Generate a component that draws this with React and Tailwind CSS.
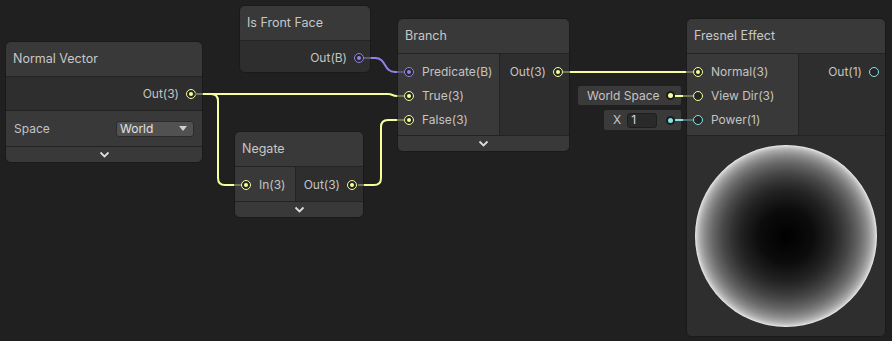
import React from "react";

const PORT = {
  v3: { ring: "border-[#F6FF9A]", dot: "bg-[#F6FF9A]" },
  bool: { ring: "border-[#9481E6]", dot: "bg-[#9481E6]" },
  v1: { ring: "border-[#84E4E7]", dot: "bg-[#84E4E7]" },
};

const Port = ({ type, on }) => {
  const c = PORT[type];
  return (
    <span className={`flex h-[10px] w-[10px] shrink-0 items-center justify-center rounded-full border-[1.5px] bg-[#262626] ${c.ring}`}>
      {on && <span className={`h-[4px] w-[4px] rounded-full ${c.dot}`} />}
    </span>
  );
};

const InRow = ({ label, type, on }) => (
  <div className="flex h-6 items-center gap-[8px] pl-[6px]">
    <Port type={type} on={on} />
    <span>{label}</span>
  </div>
);

const OutRow = ({ label, type, on }) => (
  <div className="flex h-6 items-center justify-end gap-[7px] pr-[6px]">
    <span>{label}</span>
    <Port type={type} on={on} />
  </div>
);

const Foot = () => (
  <div className="flex h-[16px] items-center justify-center border-t border-[#232323] bg-[#393939]">
    <svg width="11" height="7" viewBox="0 0 11 7">
      <path d="M1.5 1.5l4 4 4-4" stroke="#dcdcdc" strokeWidth="1.8" fill="none" />
    </svg>
  </div>
);

const Node = ({ className, title, children }) => (
  <div className={`absolute flex flex-col overflow-hidden rounded-[6px] border border-[#1a1a1a] bg-[#2e2e2e] text-[12px] text-[#c4c4c4] ${className}`}>
    <div className="flex h-[35px] shrink-0 items-center border-b border-[#232323] bg-[#393939] px-[7px] text-[12.5px] text-[#c8c8c8]">
      {title}
    </div>
    {children}
  </div>
);

const Dot = ({ color }) => (
  <span className="flex h-[9px] w-[9px] items-center justify-center rounded-full bg-[#1c1c1c]">
    <span className={`h-[5px] w-[5px] rounded-full ${color}`} />
  </span>
);

const Y = "#F6FF9A";
const YD = "#74765a";
const PU = "#9481E6";
const PD = "#5d5680";
const CY = "#84E4E7";
const CD = "#4d7374";

export default function App() {
  return (
    <div className="relative h-[341px] w-[892px] overflow-hidden bg-[#202020] font-['Inter',sans-serif]">
      {/* Normal Vector */}
      <Node className="left-[5px] top-[41px] w-[198px]" title="Normal Vector">
        <div className="pb-[4px] pt-[5px]">
          <OutRow label="Out(3)" type="v3" on />
        </div>
        <div className="flex h-[36px] items-center justify-between border-t border-[#232323] bg-[#393939] pl-[8px] pr-[8px]">
          <span>Space</span>
          <div className="flex h-[16px] w-[78px] items-center justify-between rounded-[3px] border border-[#2c2c2c] bg-[#515151] pl-[3px] pr-[6px] text-[#e2e2e2]">
            <span>World</span>
            <svg width="8" height="5" viewBox="0 0 8 5">
              <path d="M0 0h8L4 5z" fill="#cfcfcf" />
            </svg>
          </div>
        </div>
        <Foot />
      </Node>

      {/* Is Front Face */}
      <Node className="left-[239px] top-[5px] w-[132px]" title="Is Front Face">
        <div className="pb-[2px] pt-[5px]">
          <OutRow label="Out(B)" type="bool" on />
        </div>
      </Node>

      {/* Branch */}
      <Node className="left-[397px] top-[18px] w-[173px]" title="Branch">
        <div className="flex">
          <div className="w-[102px] border-r border-[#232323] bg-[#393939] pb-[3px] pt-[6px]">
            <InRow label="Predicate(B)" type="bool" on />
            <InRow label="True(3)" type="v3" on />
            <InRow label="False(3)" type="v3" on />
          </div>
          <div className="flex-1 pt-[6px]">
            <OutRow label="Out(3)" type="v3" on />
          </div>
        </div>
        <Foot />
      </Node>

      {/* Negate */}
      <Node className="left-[234px] top-[131px] w-[130px]" title="Negate">
        <div className="flex">
          <div className="w-[61px] border-r border-[#232323] bg-[#393939] pb-[4px] pt-[6px]">
            <InRow label="In(3)" type="v3" on />
          </div>
          <div className="flex-1 pt-[6px]">
            <OutRow label="Out(3)" type="v3" on />
          </div>
        </div>
        <Foot />
      </Node>

      {/* Fresnel Effect */}
      <Node className="left-[686px] top-[18px] h-[319px] w-[200px]" title="Fresnel Effect">
        <div className="flex">
          <div className="w-[112px] border-r border-[#232323] bg-[#393939] pb-[3px] pt-[6px]">
            <InRow label="Normal(3)" type="v3" on />
            <InRow label="View Dir(3)" type="v3" />
            <InRow label="Power(1)" type="v1" />
          </div>
          <div className="flex-1 pt-[6px]">
            <OutRow label="Out(1)" type="v1" />
          </div>
        </div>
        <div className="flex flex-1 items-center justify-center border-t border-[#232323] bg-[#2e2e2e]">
          <div className="h-[182px] w-[182px] rounded-full bg-[radial-gradient(circle_closest-side,#000_0%,#0c0c0c_30%,#222_50%,#333_60%,#494949_70%,#666_80%,#797979_85%,#909090_90%,#afafaf_95%,#cccccc_98%,#eeeeee_100%)]" />
        </div>
      </Node>

      {/* inline default values */}
      <div className="absolute left-[578px] top-[86px] flex h-[19px] w-[103px] items-center justify-between rounded-[2px] bg-[#3a3a3a] pl-[9px] pr-[6px] text-[12px] text-[#c4c4c4]">
        <span>World Space</span>
        <Dot color="bg-[#F6FF9A]" />
      </div>
      <div className="absolute left-[604px] top-[110px] flex h-[20px] w-[77px] items-center rounded-[2px] bg-[#3a3a3a] pl-[9px] pr-[6px] text-[12px] text-[#c4c4c4]">
        <span>X</span>
        <div className="ml-[6px] flex h-[15px] w-[30px] items-center rounded-[3px] border border-[#1e1e1e] bg-[#2a2a2a] pl-[3px] text-[#d8d8d8]">1</div>
        <span className="ml-auto">
          <Dot color="bg-[#84E4E7]" />
        </span>
      </div>

      {/* wires */}
      <svg className="pointer-events-none absolute inset-0" width="892" height="341" fill="none" strokeWidth="2">
        {/* Normal Vector out */}
        <path d="M195 94H203" stroke={YD} />
        <path d="M203 94H388C393 94 392 96 397 96" stroke={Y} />
        <path d="M397 96H404" stroke={YD} />
        <path d="M203 94H211Q218 94 218 101V178Q218 185 225 185H234" stroke={Y} />
        <path d="M234 185H241" stroke={YD} />
        {/* Is Front Face -> Predicate */}
        <path d="M364 58H371" stroke={PD} />
        <path d="M371 58H375C387 58 383 72 395 72H397" stroke={PU} />
        <path d="M397 72H404" stroke={PD} />
        {/* Negate -> False */}
        <path d="M358 185H364" stroke={YD} />
        <path d="M364 185H374Q381 185 381 178V127Q381 120 388 120H397" stroke={Y} />
        <path d="M397 120H404" stroke={YD} />
        {/* Branch -> Fresnel Normal */}
        <path d="M563 72H570" stroke={YD} />
        <path d="M570 72H686" stroke={Y} />
        <path d="M686 72H693" stroke={YD} />
        {/* defaults */}
        <path d="M675 96H683" stroke={Y} />
        <path d="M683 96H693" stroke={YD} />
        <path d="M675 120H683" stroke={CY} />
        <path d="M683 120H693" stroke={CD} />
      </svg>
    </div>
  );
}
